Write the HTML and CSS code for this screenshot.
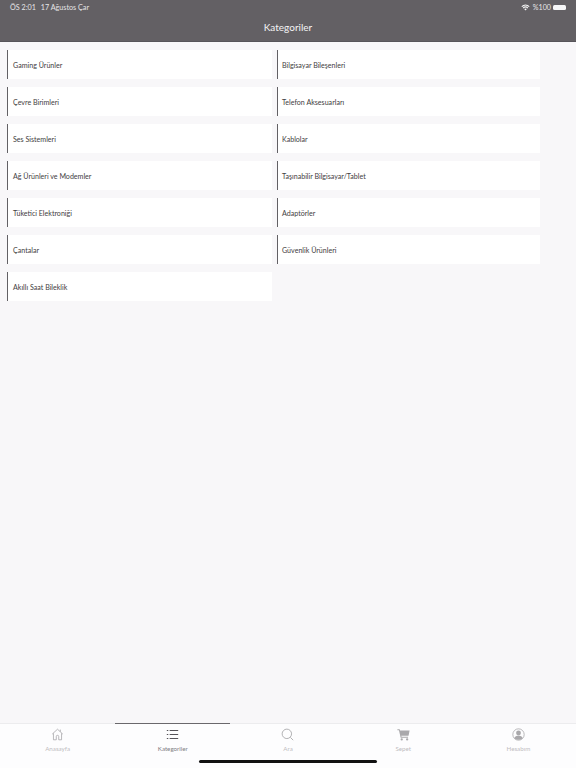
FILE: index.html
```html
<!DOCTYPE html>
<html lang="tr">
<head>
<meta charset="utf-8">
<title>Kategoriler</title>
<link rel="stylesheet" href="styles.css">
</head>
<body>
<div class="app">
  <header class="header">
    <div class="status">
      <span class="status-left"><span>ÖS 2:01</span><span>17 Ağustos Çar</span></span>
      <span class="status-right">
        <svg class="wifi" viewBox="0 0 16 12"><path d="M8 11.500 5.600 8.800a3.400 3.400 0 0 1 4.800 0zM4.500 7.600 3.200 6.200a7 7 0 0 1 9.600 0l-1.300 1.400a5.100 5.100 0 0 0-7 0zM2.100 5 .7 3.600a10.600 10.600 0 0 1 14.600 0L13.900 5a8.700 8.700 0 0 0-11.800 0z"/></svg>
        <span>%100</span>
        <span class="battery"></span>
      </span>
    </div>
    <h1 class="title">Kategoriler</h1>
  </header>
  <main class="grid">
    <a class="card">Gaming Ürünler</a>
    <a class="card">Bilgisayar Bileşenleri</a>
    <a class="card">Çevre Birimleri</a>
    <a class="card">Telefon Aksesuarları</a>
    <a class="card">Ses Sistemleri</a>
    <a class="card">Kablolar</a>
    <a class="card">Ağ Ürünleri ve Modemler</a>
    <a class="card">Taşınabilir Bilgisayar/Tablet</a>
    <a class="card">Tüketici Elektroniği</a>
    <a class="card">Adaptörler</a>
    <a class="card">Çantalar</a>
    <a class="card">Güvenlik Ürünleri</a>
    <a class="card">Akıllı Saat Bileklik</a>
  </main>
  <nav class="tabs">
    <a class="tab">
      <svg class="icon" viewBox="0 0 16 16" fill="none" stroke="currentColor" stroke-width="1"><path d="M1.500 7.500 8 1.500l6.500 6M3 6.500V14.500h3.500v-4a1.500 1.500 0 0 1 3 0v4H13V6.500M11.500 2v2.500"/></svg>
      <span>Anasayfa</span>
    </a>
    <a class="tab active">
      <svg class="icon" viewBox="0 0 16 16" fill="none" stroke="currentColor" stroke-width="1.300"><path d="M4.500 3H15M4.500 8H15M4.500 13H15M1 3h1.800M1 8h1.800M1 13h1.800"/></svg>
      <span>Kategoriler</span>
    </a>
    <a class="tab">
      <svg class="icon" viewBox="0 0 16 16" fill="none" stroke="currentColor" stroke-width="1.100"><circle cx="7.200" cy="7.200" r="5.800"/><path d="m11.500 11.500 3.500 3.500"/></svg>
      <span>Ara</span>
    </a>
    <a class="tab">
      <svg class="icon" viewBox="0 0 16 16" fill="currentColor"><path d="M.5 1.500h2.800l.4 1.500H15.500l-1.300 6.500H5.300l.3 1.300h8v1.200H4.500L2.400 2.700H.5z"/><circle cx="5.800" cy="14" r="1.400"/><circle cx="12.500" cy="14" r="1.400"/></svg>
      <span>Sepet</span>
    </a>
    <a class="tab">
      <svg class="icon" viewBox="0 0 16 16"><circle cx="8" cy="8" r="7" fill="none" stroke="currentColor" stroke-width="1"/><circle cx="8" cy="6.200" r="3" fill="currentColor"/><path d="M2.800 12.500c.8-2.300 2.800-3 5.200-3s4.400.7 5.200 3A6.600 6.600 0 0 1 8 14.600a6.600 6.600 0 0 1-5.200-2.100z" fill="currentColor"/></svg>
      <span>Hesabım</span>
    </a>
  </nav>
  <div class="home-indicator"></div>
</div>
</body>
</html>
```
FILE: styles.css
```css
* { box-sizing: border-box; }
html, body { margin: 0; padding: 0; }
body { font-family: "Lato", "Noto Sans", sans-serif; background: #f8f7f9; color: #2f2d31; }
.app { position: relative; width: 576px; height: 768px; display: flex; flex-direction: column; overflow: hidden; }
.header { height: 42px; background: #636064; color: #fff; flex: none; padding: 0 10px; border-bottom: 1px solid #57555a; }
.status { height: 14px; display: flex; justify-content: space-between; align-items: center; font-size: 7.200px; color: #e6e5e7; }
.status-left { display: flex; gap: 5px; }
.status-right { display: flex; align-items: center; gap: 2px; }
.wifi { width: 9px; height: 7px; fill: #f4f4f5; margin-right: 1px; }
.battery { width: 13px; height: 5px; background: #f6f6f7; border-radius: 1.500px; display: block; }
.title { margin: 0; padding-top: 6px; font-size: 10px; font-weight: 400; line-height: 15px; text-align: center; color: #f4f4f5; }
.grid { flex: 1; padding: 8px 36px 0 7px; display: grid; grid-template-columns: 265px 263px; column-gap: 5px; grid-auto-rows: 29px; row-gap: 8.050px; align-content: start; }
.card { display: flex; align-items: center; background: #fff; border-left: 1px solid #626064; padding: 1px 0 0 5px; font-size: 7.100px; color: #3f3d41; }
.card:nth-child(even) { padding-left: 4px; }
.tabs { height: 45px; flex: none; display: grid; grid-template-columns: repeat(5, 1fr); background: #fdfdfe; border-top: 1px solid #ececee; }
.tab { display: flex; flex-direction: column; align-items: center; gap: 4px; padding-top: 4px; color: #a9a8ab; font-size: 6.200px; }
.tab span { color: #bdbcbf; line-height: 8px; }
.tab .icon { width: 13px; height: 13px; display: block; }
.tab.active { color: #555358; box-shadow: 0 -1px 0 #6a686c; }
.tab.active span { color: #807e83; }
.home-indicator { position: absolute; left: 199px; top: 760px; width: 178px; height: 3px; border-radius: 2px; background: #111; }
```
